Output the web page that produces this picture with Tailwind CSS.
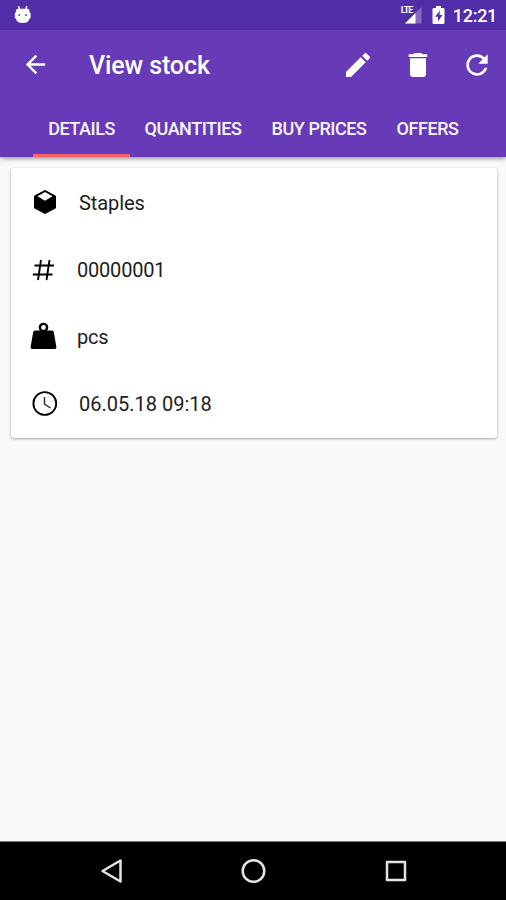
<!DOCTYPE html>
<html lang="en">
<head>
<meta charset="utf-8">
<title>View stock</title>
<script src="https://cdn.jsdelivr.net/npm/@tailwindcss/browser@4"></script>
</head>
<body class="w-[506px] h-[900px] overflow-hidden bg-[#fafafa] font-[Roboto,sans-serif] flex flex-col">
  <header class="relative z-10 bg-[#673ab7] text-white h-[157px] shrink-0 shadow-[0_1px_5px_rgba(0,0,0,0.5)]">
    <div class="h-[30px] bg-[#512da8] flex items-center pl-[14px] pr-[9px]">
      <svg class="w-[18px] h-[20px]" viewBox="0 0 18 20" fill="#fff">
        <path d="M4.500 1.200l1 3.200M12.800 1.200l-1 3.200" stroke="#fff" stroke-width="1.500"/>
        <path d="M1.800 6Q2 3.800 4.200 3.800H13.200Q15.400 3.800 15.600 6V7.500L16.600 8.300V13L15.600 13.500Q14.600 18 8.700 18Q2.800 18 1.800 13.500L.8 13V8.300L1.800 7.500Z"/>
        <circle cx="5.200" cy="10" r=".9" fill="#512da8"/><circle cx="12" cy="10" r=".9" fill="#512da8"/>
      </svg>
      <div class="ml-auto flex items-center">
        <div class="relative w-[23px] h-[20px]">
          <span class="absolute left-[1px] top-[1px] text-[9px] leading-[8px] font-bold tracking-[-1px]">LTE</span>
          <svg class="w-[23px] h-[20px]" viewBox="0 0 23 20"><path d="M5 18.500L21.500 2V18.500Z" fill="#fff" opacity=".3"/><path d="M5 18.500L15.500 8V18.500Z" fill="#fff"/></svg>
        </div>
        <svg class="ml-[9px] w-[13px] h-[20px]" viewBox="0 0 13 20"><path d="M4 1H9V3H11.200Q12.500 3 12.500 4.300V17.700Q12.500 19 11.200 19H1.800Q.5 19 .5 17.700V4.300Q.5 3 1.800 3H4Z" fill="#fff"/><path d="M8 5.500L3 11.800H6V16.500L10.500 10H7.500Z" fill="#512da8"/></svg>
        <span class="ml-[8px] mt-[2px] text-[18px] leading-[20px] font-medium tracking-[-0.3px]">12:21</span>
      </div>
    </div>
    <div class="h-[69px] flex items-center pl-[20.500px] pr-[13px]">
      <svg class="w-[29px] h-[29px]" viewBox="0 0 24 24" fill="#fff"><path d="M20 11H7.830l5.590-5.590L12 4l-8 8 8 8 1.410-1.410L7.830 13H20v-2z"/></svg>
      <h1 class="ml-[39.500px] mt-[3px] text-[25px] leading-[30px] font-medium tracking-[-0.1px]">View stock</h1>
      <div class="ml-auto flex gap-[27.500px]">
        <svg class="w-[32px] h-[32px]" viewBox="0 0 24 24" fill="#fff"><path d="M3 17.250V21h3.750L17.810 9.940l-3.750-3.750L3 17.250zM20.710 7.040c.39-.39.39-1.020 0-1.410l-2.340-2.340c-.39-.39-1.020-.39-1.410 0l-1.830 1.830 3.750 3.750 1.830-1.830z"/></svg>
        <svg class="w-[32px] h-[32px]" viewBox="0 0 24 24" fill="#fff"><path d="M6 19c0 1.100.9 2 2 2h8c1.100 0 2-.9 2-2V7H6v12zM19 4h-3.500l-1-1h-5l-1 1H5v2h14V4z"/></svg>
        <svg class="w-[32px] h-[32px]" viewBox="0 0 24 24" fill="#fff"><path d="M17.650 6.350C16.200 4.900 14.210 4 12 4c-4.420 0-7.990 3.580-7.990 8s3.570 8 7.990 8c3.730 0 6.840-2.550 7.730-6h-2.080c-.82 2.330-3.040 4-5.650 4-3.310 0-6-2.690-6-6s2.690-6 6-6c1.660 0 3.140.69 4.220 1.780L13 11h7V4l-2.350 2.350z"/></svg>
      </div>
    </div>
    <nav class="h-[58px] ml-[33px] flex text-[18px] leading-[60px] font-medium text-[#f8f4fc] tracking-[-0.45px]">
      <div class="w-[97px] text-center border-b-[3px] border-[#f9606c]">DETAILS</div>
      <div class="w-[126px] text-center">QUANTITIES</div>
      <div class="w-[126px] text-center">BUY PRICES</div>
      <div class="w-[91px] text-center">OFFERS</div>
    </nav>
  </header>
  <main class="grow">
    <section class="ml-[11px] mr-[9px] mt-[11px] h-[270px] bg-white rounded-[3px] shadow-[0_1px_3px_rgba(0,0,0,0.35)] text-[20px] text-[#1c1c1c]">
      <div class="h-[67px] flex items-center pl-[22px]">
        <svg class="w-[24px] h-[26px]" viewBox="0 0 24 26"><path d="M12 1.500L22.500 7V19L12 24.500L1.500 19V7Z" fill="#000" stroke="#000" stroke-linejoin="round"/><path d="M12 3L19.500 7.200L12 11.800L4.500 7.200Z" fill="#fff"/></svg>
        <span class="ml-[22px] mt-[2px] tracking-[-0.1px]">Staples</span>
      </div>
      <div class="h-[67px] flex items-center pl-[21px]">
        <svg class="w-[23px] h-[22px] mt-[2px]" viewBox="0 0 23 22" fill="none" stroke="#000" stroke-width="1.900"><path d="M9 1L6 21M17.500 1L14.500 21M2.500 6.500H22M.8 15.500H20.500"/></svg>
        <span class="ml-[22px] mt-[3px] tracking-[-0.2px]">00000001</span>
      </div>
      <div class="h-[67px] flex items-center pl-[19px]">
        <svg class="w-[27px] h-[28px]" viewBox="0 0 27 28"><circle cx="13.500" cy="5.500" r="3.600" fill="none" stroke="#000" stroke-width="2.400"/><path d="M5 8.500H22Q23.500 8.500 23.800 10L26.400 25Q26.600 27 24.800 27H2.200Q.4 27 .6 25L3.200 10Q3.500 8.500 5 8.500Z"/></svg>
        <span class="ml-[20px] mt-[2px] tracking-[-0.2px]">pcs</span>
      </div>
      <div class="h-[67px] flex items-center pl-[21px]">
        <svg class="w-[26px] h-[26px]" viewBox="0 0 26 26" fill="none" stroke="#000"><circle cx="12.800" cy="13.500" r="11.400" stroke-width="1.900"/><path d="M12.500 7V14L18.500 18" stroke="#333" stroke-width="1.500"/></svg>
        <span class="ml-[21px] mt-[3px]">06.05.18 09:18</span>
      </div>
    </section>
  </main>
  <footer class="h-[59px] shrink-0 bg-black border-t border-[#777] flex items-center pl-[100px]">
    <svg class="w-[23px] h-[26px]" viewBox="0 0 23 26" fill="none" stroke="#e4e4e4" stroke-width="2.500" stroke-linejoin="round"><path d="M20.500 2.500V23.500L2.500 13Z"/></svg>
    <svg class="ml-[117px] w-[26px] h-[26px]" viewBox="0 0 26 26" fill="none" stroke="#e4e4e4" stroke-width="2.500"><circle cx="13.500" cy="13" r="10.800"/></svg>
    <svg class="ml-[119px] w-[22px] h-[22px]" viewBox="0 0 22 22" fill="none" stroke="#e4e4e4" stroke-width="2.500" stroke-linejoin="round"><path d="M2 2H20V20H2Z"/></svg>
  </footer>
</body>
</html>
